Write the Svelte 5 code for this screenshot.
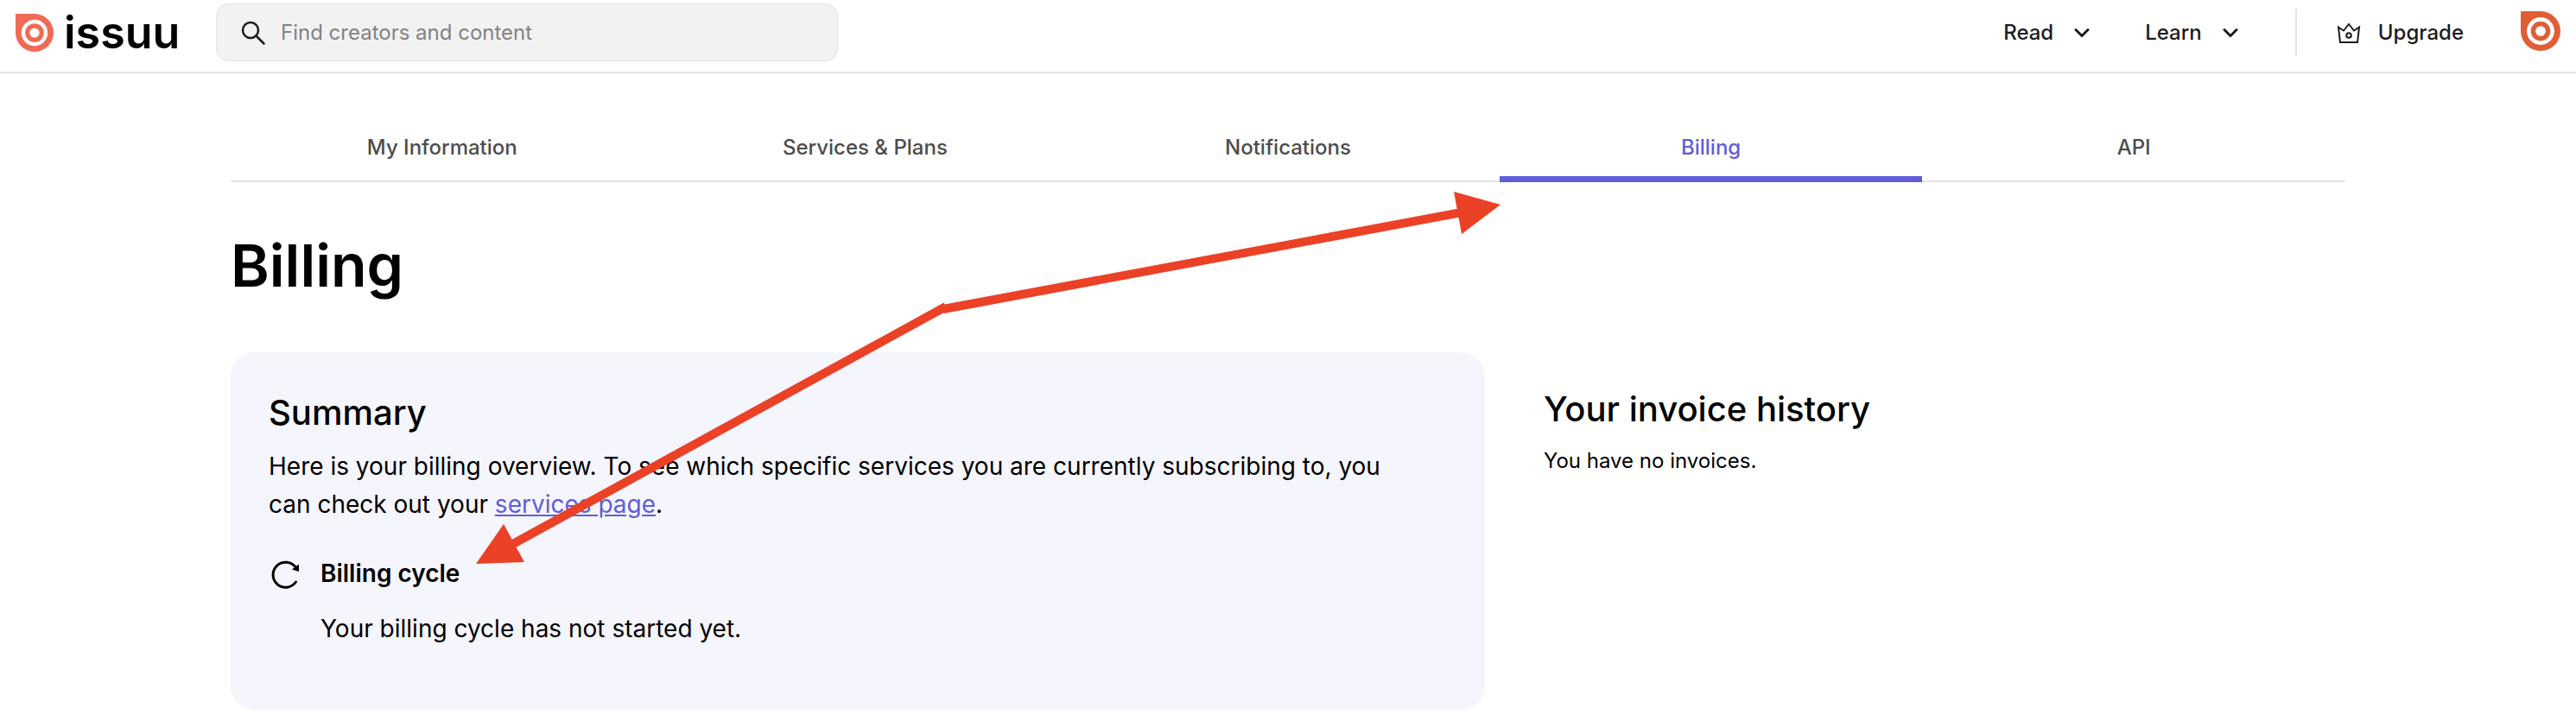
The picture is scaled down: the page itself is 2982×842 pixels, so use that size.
<script lang="ts">
    const menus = ['Read', 'Learn'];

    const tabs = [
        { id: 'information', label: 'My Information' },
        { id: 'services', label: 'Services & Plans' },
        { id: 'notifications', label: 'Notifications' },
        { id: 'billing', label: 'Billing' },
        { id: 'api', label: 'API' }
    ];

    let activeTab = $state('billing');
    let query = $state('');
</script>

{#snippet mark()}
    <path d="M0 1Q0 0 1 0H22A22 22 0 1 1 0 22Z" fill="currentColor" />
    <circle cx="22" cy="22" r="13" fill="none" stroke="#fff" stroke-width="4.4" />
    <circle cx="22" cy="22" r="5.6" fill="#fff" />
{/snippet}

<div class="page">
    <header>
        <a class="logo" href="#home" aria-label="issuu home">
            <svg viewBox="0 0 44 44" aria-hidden="true">{@render mark()}</svg>
            <span>issuu</span>
        </a>

        <label class="search">
            <svg viewBox="0 0 28 28" aria-hidden="true">
                <circle cx="11" cy="11" r="9" />
                <path d="M17.5 17.5 26.5 26.5" />
            </svg>
            <input type="search" bind:value={query} placeholder="Find creators and content" aria-label="Search" />
        </label>

        <nav class="menus">
            {#each menus as menu}
                <button class="menu">
                    {menu}
                    <svg viewBox="0 0 18 12" aria-hidden="true"><path d="M2 2.5 9 9.5 16 2.5" /></svg>
                </button>
            {/each}
        </nav>

        <a class="upgrade" href="#upgrade">
            <svg viewBox="0 0 28 26" aria-hidden="true">
                <path d="M2 6.5 8 10.5 14 3 20 10.5 26 6.5 24 24H4Z" />
                <circle cx="14" cy="16" r="2.8" />
            </svg>
            Upgrade
        </a>

        <button class="avatar" aria-label="Account">
            <svg viewBox="0 0 44 44" aria-hidden="true">{@render mark()}</svg>
        </button>
    </header>

    <main>
        <nav class="tabs">
            {#each tabs as tab}
                <a
                    href="#{tab.id}"
                    class:active={activeTab === tab.id}
                    aria-current={activeTab === tab.id ? 'page' : undefined}
                    onclick={() => (activeTab = tab.id)}
                >
                    {tab.label}
                </a>
            {/each}
        </nav>

        <h1>Billing</h1>

        <div class="columns">
            <section class="summary">
                <h2>Summary</h2>
                <p class="overview">
                    Here is your billing overview. To see which specific services you are currently subscribing to, you
                    can check out your <a href="#services">services page</a>.
                </p>
                <div class="cycle">
                    <svg viewBox="0 0 40 40" aria-hidden="true">
                        <path class="arc" d="M31.5 28A14.5 14.5 0 1 1 31.5 11.5" />
                        <path d="M35 7.5V16L27 13.5Z" />
                    </svg>
                    <div>
                        <h3>Billing cycle</h3>
                        <p>Your billing cycle has not started yet.</p>
                    </div>
                </div>
            </section>

            <section class="invoices">
                <h2>Your invoice history</h2>
                <p>You have no invoices.</p>
            </section>
        </div>
    </main>

    <!-- callout from the billing tab to the billing cycle -->
    <svg class="callout" viewBox="0 0 2982 842" aria-hidden="true">
        <path class="shaft" d="M592 631 1095 355" />
        <path class="shaft" d="M1092 358 1692 246" />
        <path d="M1737 237 1683 222 1692 271Z" />
        <path d="M551 653 583 607 607 651Z" />
    </svg>
</div>

<style>
    :global(body) {
        margin: 0;
        background: #fff;
    }

    .page {
        position: relative;
        font-family: Inter, 'Liberation Sans', sans-serif;
        font-size: 24px;
        line-height: 32px;
        color: #000;
    }

    header {
        display: flex;
        align-items: center;
        padding: 4px 18px 12px;
        border-bottom: 2px solid #e4e4e4;
    }

    a {
        color: inherit;
        text-decoration: none;
    }

    button {
        padding: 0;
        border: none;
        background: none;
        font: inherit;
        color: inherit;
        cursor: pointer;
    }

    .logo {
        display: flex;
        align-items: center;
        gap: 12px;
        width: 232px;
        color: #f06a55;
    }

    .logo svg {
        width: 44px;
        height: 44px;
    }

    .logo span {
        font-size: 52px;
        line-height: 60px;
        font-weight: 600;
        color: #000;
    }

    .search {
        display: flex;
        align-items: center;
        gap: 18px;
        box-sizing: border-box;
        width: 720px;
        height: 67px;
        padding: 0 28px;
        border: 1px solid #e4e4e4;
        border-radius: 14px;
        background: #f2f2f2;
    }

    .search svg {
        flex: none;
        width: 28px;
        height: 28px;
        fill: none;
        stroke: #1c1c1c;
        stroke-width: 2.5;
        stroke-linecap: round;
    }

    .search input {
        flex: 1;
        min-width: 0;
        padding: 0;
        border: none;
        outline: none;
        background: none;
        font: inherit;
        color: #1c1c1c;
    }

    .search input::placeholder {
        color: #828282;
        opacity: 1;
    }

    .menus {
        display: flex;
        gap: 64px;
        margin-left: auto;
        padding-right: 66px;
        font-weight: 500;
        color: #1c1c1c;
    }

    .menu {
        display: flex;
        align-items: center;
        gap: 24px;
    }

    .menu svg {
        width: 18px;
        height: 12px;
        fill: none;
        stroke: currentColor;
        stroke-width: 3;
        stroke-linecap: round;
        stroke-linejoin: round;
    }

    .upgrade {
        display: flex;
        align-items: center;
        gap: 20px;
        height: 55px;
        padding: 0 66px 0 46px;
        border-left: 2px solid #e4e4e4;
        font-weight: 500;
        color: #1c1c1c;
    }

    .upgrade svg {
        width: 28px;
        height: 26px;
        fill: none;
        stroke: currentColor;
        stroke-width: 2;
    }

    .avatar {
        padding-bottom: 4px;
        color: #df5e36;
    }

    .avatar svg {
        display: block;
        width: 46px;
        height: 46px;
    }

    main {
        max-width: 2448px;
        margin: 0 auto;
        padding-top: 40px;
    }

    .tabs {
        display: flex;
        border-bottom: 2px solid #e4e4e4;
        font-weight: 500;
        color: #4c4c4c;
    }

    .tabs a {
        flex: 1;
        margin-bottom: -2px;
        padding: 30px 0 17px;
        border-bottom: 7px solid transparent;
        text-align: center;
    }

    .tabs .active {
        border-color: #5f5ddb;
        color: #5f5ddb;
    }

    h1,
    h2,
    h3,
    p {
        margin: 0;
    }

    h1 {
        padding: 54px 0 59px;
        font-size: 68px;
        line-height: 84px;
        font-weight: 600;
    }

    h2 {
        font-size: 40px;
        line-height: 52px;
        font-weight: 500;
    }

    h3 {
        font-size: 28px;
        line-height: 44px;
        font-weight: 600;
    }

    .columns {
        display: grid;
        grid-template-columns: 1452fr 928fr;
        gap: 68px;
    }

    .summary {
        padding: 44px 44px 72px;
        border-radius: 28px;
        background: #f5f5fe;
        font-size: 28px;
        line-height: 44px;
    }

    .overview {
        max-width: 1320px;
        padding: 14px 0 36px;
    }

    .overview a {
        color: #5f5ddb;
        text-decoration: underline;
    }

    .cycle {
        display: flex;
        gap: 20px;
    }

    .cycle svg {
        flex: none;
        width: 40px;
        height: 40px;
        margin-top: 4px;
    }

    .cycle p {
        padding-top: 20px;
    }

    .arc {
        fill: none;
        stroke: currentColor;
        stroke-width: 3;
        stroke-linecap: round;
    }

    .invoices {
        padding-top: 40px;
    }

    .invoices p {
        padding-top: 18px;
    }

    .callout {
        position: absolute;
        top: 0;
        left: 0;
        width: 100%;
        fill: #eb4126;
        pointer-events: none;
    }

    .shaft {
        stroke: #eb4126;
        stroke-width: 10;
    }
</style>
